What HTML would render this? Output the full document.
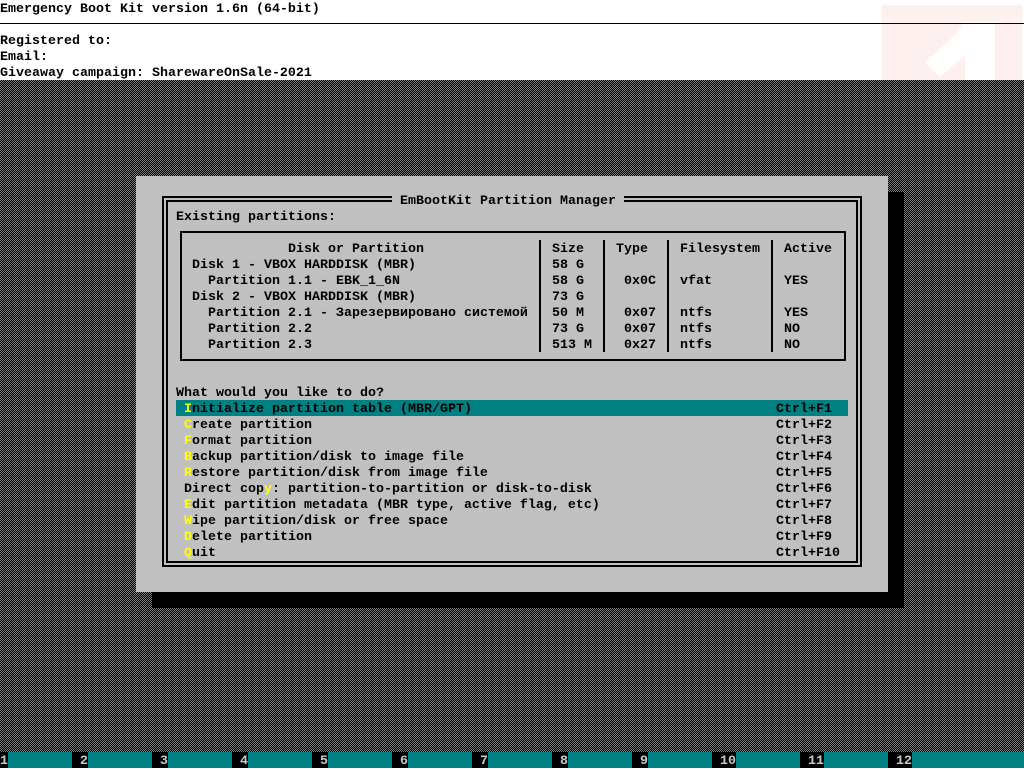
<!DOCTYPE html>
<html><head><meta charset="utf-8"><style>
html,body{margin:0;padding:0}
body{width:1024px;height:768px;position:relative;overflow:hidden;background:#fff;font-family:"Liberation Mono",monospace;font-weight:bold;font-size:13.333px;line-height:16px;color:#000}
.t{position:absolute;white-space:pre;height:14px;padding-top:2px;line-height:15px}
.r{position:absolute}
.y{color:#ff0}
.bg{position:absolute;left:0;top:80px;width:1024px;height:672px;background:repeating-conic-gradient(#000 0 25%,#7a7a7a 0 50%) 0 0/2px 2px}
.w{color:#c8c8c8}
</style></head><body>
<svg class="r" style="left:882px;top:5px" width="140" height="75"><rect width="140" height="75" fill="#fff0f0"/><polygon points="83,17 113,17 113,75 83,75 83,50 58,72 43,58 75,28" fill="#fff"/></svg>
<div class="t" style="left:0;top:0">Emergency Boot Kit version 1.6n (64-bit)</div>
<div class="r" style="left:0;top:23px;width:1024px;height:1px;background:#000"></div>
<div class="t" style="left:0;top:32px">Registered to:</div>
<div class="t" style="left:0;top:48px">Email:</div>
<div class="t" style="left:0;top:64px">Giveaway campaign: SharewareOnSale-2021</div>
<div class="bg"></div>
<div class="r" style="left:152px;top:192px;width:752px;height:416px;background:#000"></div>
<div class="r" style="left:136px;top:176px;width:752px;height:416px;background:#c0c0c0"></div>
<div class="r" style="left:162px;top:196px;width:696px;height:367px;border:2px solid #000"></div>
<div class="r" style="left:166px;top:200px;width:688px;height:359px;border:2px solid #000"></div>
<div class="t" style="left:392px;top:192px;background:#c0c0c0"> EmBootKit Partition Manager </div>
<div class="t" style="left:176px;top:208px">Existing partitions:</div>
<div class="r" style="left:180px;top:231px;width:662px;height:126px;border:2px solid #000"></div>
<div class="r" style="left:539px;top:240px;width:2px;height:112px;background:#000"></div>
<div class="r" style="left:603px;top:240px;width:2px;height:112px;background:#000"></div>
<div class="r" style="left:667px;top:240px;width:2px;height:112px;background:#000"></div>
<div class="r" style="left:771px;top:240px;width:2px;height:112px;background:#000"></div>
<div class="t" style="left:288px;top:240px">Disk or Partition</div>
<div class="t" style="left:552px;top:240px">Size</div>
<div class="t" style="left:616px;top:240px">Type</div>
<div class="t" style="left:680px;top:240px">Filesystem</div>
<div class="t" style="left:784px;top:240px">Active</div>
<div class="t" style="left:192px;top:256px">Disk 1 - VBOX HARDDISK (MBR)</div>
<div class="t" style="left:552px;top:256px">58 G</div>
<div class="t" style="left:208px;top:272px">Partition 1.1 - EBK_1_6N</div>
<div class="t" style="left:552px;top:272px">58 G</div>
<div class="t" style="left:624px;top:272px">0x0C</div>
<div class="t" style="left:680px;top:272px">vfat</div>
<div class="t" style="left:784px;top:272px">YES</div>
<div class="t" style="left:192px;top:288px">Disk 2 - VBOX HARDDISK (MBR)</div>
<div class="t" style="left:552px;top:288px">73 G</div>
<div class="t" style="left:208px;top:304px">Partition 2.1 - Зарезервировано системой</div>
<div class="t" style="left:552px;top:304px">50 M</div>
<div class="t" style="left:624px;top:304px">0x07</div>
<div class="t" style="left:680px;top:304px">ntfs</div>
<div class="t" style="left:784px;top:304px">YES</div>
<div class="t" style="left:208px;top:320px">Partition 2.2</div>
<div class="t" style="left:552px;top:320px">73 G</div>
<div class="t" style="left:624px;top:320px">0x07</div>
<div class="t" style="left:680px;top:320px">ntfs</div>
<div class="t" style="left:784px;top:320px">NO</div>
<div class="t" style="left:208px;top:336px">Partition 2.3</div>
<div class="t" style="left:552px;top:336px">513 M</div>
<div class="t" style="left:624px;top:336px">0x27</div>
<div class="t" style="left:680px;top:336px">ntfs</div>
<div class="t" style="left:784px;top:336px">NO</div>
<div class="t" style="left:176px;top:384px">What would you like to do?</div>
<div class="r" style="left:176px;top:400px;width:672px;height:16px;background:#008080"></div>
<div class="t" style="left:184px;top:400px"><span class="y">I</span>nitialize partition table (MBR/GPT)</div>
<div class="t" style="left:184px;top:416px"><span class="y">C</span>reate partition</div>
<div class="t" style="left:184px;top:432px"><span class="y">F</span>ormat partition</div>
<div class="t" style="left:184px;top:448px"><span class="y">B</span>ackup partition/disk to image file</div>
<div class="t" style="left:184px;top:464px"><span class="y">R</span>estore partition/disk from image file</div>
<div class="t" style="left:184px;top:480px">Direct cop<span class="y">y</span>: partition-to-partition or disk-to-disk</div>
<div class="t" style="left:184px;top:496px"><span class="y">E</span>dit partition metadata (MBR type, active flag, etc)</div>
<div class="t" style="left:184px;top:512px"><span class="y">W</span>ipe partition/disk or free space</div>
<div class="t" style="left:184px;top:528px"><span class="y">D</span>elete partition</div>
<div class="t" style="left:184px;top:544px"><span class="y">Q</span>uit</div>
<div class="t" style="left:776px;top:400px">Ctrl+F1</div>
<div class="t" style="left:776px;top:416px">Ctrl+F2</div>
<div class="t" style="left:776px;top:432px">Ctrl+F3</div>
<div class="t" style="left:776px;top:448px">Ctrl+F4</div>
<div class="t" style="left:776px;top:464px">Ctrl+F5</div>
<div class="t" style="left:776px;top:480px">Ctrl+F6</div>
<div class="t" style="left:776px;top:496px">Ctrl+F7</div>
<div class="t" style="left:776px;top:512px">Ctrl+F8</div>
<div class="t" style="left:776px;top:528px">Ctrl+F9</div>
<div class="t" style="left:776px;top:544px">Ctrl+F10</div>
<div class="r" style="left:0;top:752px;width:1024px;height:16px;background:#008080"></div>
<div class="t w" style="left:0;top:752px;background:#000;width:8px">1</div>
<div class="t w" style="left:72px;top:752px;background:#000;padding-left:8px">2</div>
<div class="t w" style="left:152px;top:752px;background:#000;padding-left:8px">3</div>
<div class="t w" style="left:232px;top:752px;background:#000;padding-left:8px">4</div>
<div class="t w" style="left:312px;top:752px;background:#000;padding-left:8px">5</div>
<div class="t w" style="left:392px;top:752px;background:#000;padding-left:8px">6</div>
<div class="t w" style="left:472px;top:752px;background:#000;padding-left:8px">7</div>
<div class="t w" style="left:552px;top:752px;background:#000;padding-left:8px">8</div>
<div class="t w" style="left:632px;top:752px;background:#000;padding-left:8px">9</div>
<div class="t w" style="left:712px;top:752px;background:#000;padding-left:8px">10</div>
<div class="t w" style="left:800px;top:752px;background:#000;padding-left:8px">11</div>
<div class="t w" style="left:888px;top:752px;background:#000;padding-left:8px">12</div>
</body></html>
